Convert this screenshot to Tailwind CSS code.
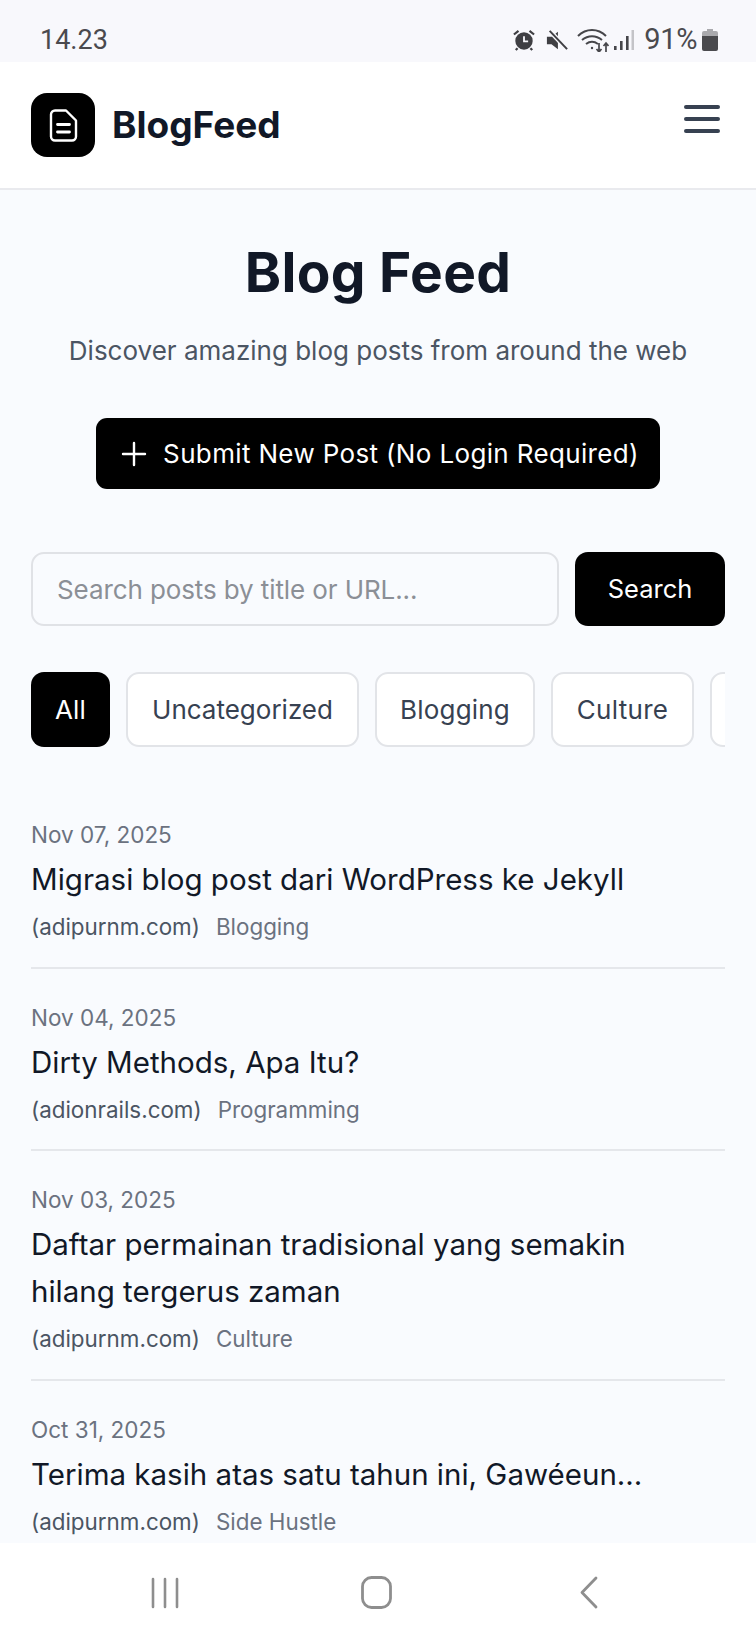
<!DOCTYPE html>
<html lang="en">
<head>
  <meta charset="UTF-8" />
  <meta name="viewport" content="width=device-width, initial-scale=1.0"/>
  <title>BlogFeed</title>
  <script src="https://cdn.jsdelivr.net/npm/@tailwindcss/browser@4"></script>
</head>
<body class="bg-[#f9fbfe]">
<div class="w-[756px] h-[1638px] flex flex-col overflow-hidden font-['Inter',sans-serif]">

  <!-- status bar -->
  <div class="h-[62px] shrink-0 bg-[#f8f8fc] flex items-center justify-between pl-[40px] pr-[38px] pt-[18px] font-['Roboto',sans-serif] text-[#4a4a4e] text-[27px]">
    <span>14.23</span>
    <div class="flex items-center">
      <svg width="22" height="22" viewBox="0 0 24 24" class="mr-[11px]" fill="#3f3f43">
        <circle cx="12" cy="13" r="9.5"/>
        <path d="M12 8v5.5h4.500" fill="none" stroke="#f8f8fc" stroke-width="2"/>
        <path d="M1 6l5-4M23 6l-5-4M5 21l-2 2M19 21l2 2" stroke="#3f3f43" stroke-width="2.400" fill="none"/>
      </svg>
      <svg width="22" height="22" viewBox="0 0 24 24" class="mr-[9px]" fill="#3f3f43">
        <path d="M1 8.500h5L13 3v19l-7-5.500H1z"/>
        <path d="M4 2l19 20" stroke="#f8f8fc" stroke-width="5"/>
        <path d="M4 2l19 20" stroke="#3f3f43" stroke-width="2.200"/>
      </svg>
      <svg width="32" height="24" viewBox="0 0 32 24" fill="none" stroke="#46464a" stroke-width="2" class="mr-[5px]">
        <path d="M1 8c8-8 20-8 28 0M5 12c6-5 14-5 20 0M9 16c4-3 8-3 12 0"/>
        <circle cx="15" cy="20" r="1.200" fill="#46464a" stroke="none"/>
        <path d="M22 15v9M19.500 21l2.500 3 2.500-3M29 24v-9M26.500 18l2.500-3 2.500 3" stroke-width="1.700"/>
      </svg>
      <svg width="20" height="22" viewBox="0 0 20 22" class="mr-[10px]">
        <rect x="0" y="17" width="2.600" height="4" fill="#46464a"/>
        <rect x="6" y="12" width="2.600" height="9" fill="#46464a"/>
        <rect x="12" y="7" width="2.600" height="14" fill="#46464a"/>
        <rect x="17.500" y="1" width="2.500" height="20" fill="#c4c4c8"/>
      </svg>
      <span class="text-[29px] tracking-[-0.4px]">91%</span>
      <svg width="16" height="22" viewBox="0 0 16 22" class="ml-[5px]">
        <path d="M5 0h6v2h3a2 2 0 0 1 2 2v4H0V4a2 2 0 0 1 2-2h3z" fill="#a9a9ad"/>
        <path d="M0 7h16v13a2 2 0 0 1-2 2H2a2 2 0 0 1-2-2z" fill="#4a4a4e"/>
      </svg>
    </div>
  </div>

  <!-- header -->
  <header class="h-[128px] shrink-0 bg-white border-b-2 border-[#e9eaee] flex items-center justify-between pl-[31px] pr-[36px]">
    <div class="flex items-center gap-[17px]">
      <div class="w-[64px] h-[64px] bg-black rounded-[16px] flex items-center justify-center">
        <svg width="36" height="36" viewBox="0 0 36 36" fill="none" stroke="white" stroke-width="2.400" stroke-linecap="round" stroke-linejoin="round">
          <path d="M21 3.500H10a4 4 0 0 0-4 4v22a4 4 0 0 0 4 4h17a4 4 0 0 0 4-4V13.500z"/>
          <path d="M12.500 17.500h12M12.500 25h12" stroke-width="2.800"/>
        </svg>
      </div>
      <span class="text-[37px] font-bold text-[#111827]">BlogFeed</span>
    </div>
    <div class="w-[36px] mb-[12px] flex flex-col gap-[8px]">
      <div class="h-[4px] rounded-full bg-[#374151]"></div>
      <div class="h-[4px] rounded-full bg-[#374151]"></div>
      <div class="h-[4px] rounded-full bg-[#374151]"></div>
    </div>
  </header>

  <!-- main -->
  <main class="flex-1 min-h-0 overflow-hidden px-[31px] pt-[42px]">
    <h1 class="text-center text-[55px] leading-[80px] font-bold text-[#111827] tracking-[0.3px]">Blog Feed</h1>
    <p class="text-center text-[26px] leading-[40px] text-[#4b5563] mt-[19px]">Discover amazing blog posts from around the web</p>

    <div class="flex justify-center mt-[47px]">
      <div class="w-[564px] h-[71px] bg-black rounded-[11px] flex items-center justify-center gap-[16px] pl-[4px] text-white text-[26px]">
        <svg width="26" height="26" viewBox="0 0 26 26" fill="none" stroke="white" stroke-width="2.400" stroke-linecap="round"><path d="M13 2v22M2 13h22"/></svg>
        <span class="tracking-[0.35px]">Submit New Post (No Login Required)</span>
      </div>
    </div>

    <div class="flex gap-[16px] mt-[63px]">
      <div class="w-[528px] h-[74px] border-2 border-[#e0e2e6] rounded-[13px] flex items-center px-[24px] text-[26px] text-[#8b8f96] tracking-[-0.1px]">Search posts by title or URL...</div>
      <div class="w-[150px] h-[74px] bg-black text-white rounded-[13px] flex items-center justify-center text-[25.500px]">Search</div>
    </div>

    <div class="flex gap-[16px] mt-[46px] overflow-hidden w-[694px]">
      <div class="shrink-0 w-[79px] h-[75px] bg-black text-white rounded-[13px] flex items-center justify-center text-[26px] tracking-[0.2px]">All</div>
      <div class="shrink-0 w-[233px] h-[75px] bg-white border-2 border-[#e2e4e8] rounded-[13px] flex items-center justify-center text-[26px] text-[#374151]">Uncategorized</div>
      <div class="shrink-0 w-[160px] h-[75px] bg-white border-2 border-[#e2e4e8] rounded-[13px] flex items-center justify-center text-[26px] text-[#374151] tracking-[0.2px]">Blogging</div>
      <div class="shrink-0 w-[143px] h-[75px] bg-white border-2 border-[#e2e4e8] rounded-[13px] flex items-center justify-center text-[26px] text-[#374151] tracking-[0.3px]">Culture</div>
      <div class="shrink-0 w-[143px] h-[75px] bg-white border-2 border-[#e2e4e8] rounded-[13px]"></div>
    </div>

    <div class="mt-[67px]">
      <article class="border-b-2 border-[#e5e7eb] pb-[17px]">
        <div class="text-[22.500px] leading-[42px] text-[#6b7280]">Nov 07, 2025</div>
        <div class="text-[29.500px] leading-[47px] text-[#111827]">Migrasi blog post dari WordPress ke Jekyll</div>
        <div class="flex gap-[16px] text-[22.400px] leading-[47px]"><span class="text-[#4b5563]">(adipurnm.com)</span><span class="text-[#6b7280]">Blogging</span></div>
      </article>
      <article class="border-b-2 border-[#e5e7eb] pt-[28px] pb-[16px]">
        <div class="text-[22.500px] leading-[42px] text-[#6b7280]">Nov 04, 2025</div>
        <div class="text-[29.500px] leading-[47px] text-[#111827]">Dirty Methods, Apa Itu?</div>
        <div class="flex gap-[16px] text-[22.400px] leading-[47px]"><span class="text-[#4b5563]">(adionrails.com)</span><span class="text-[#6b7280]">Programming</span></div>
      </article>
      <article class="border-b-2 border-[#e5e7eb] pt-[28px] pb-[17px]">
        <div class="text-[22.500px] leading-[42px] text-[#6b7280]">Nov 03, 2025</div>
        <div class="text-[29.500px] leading-[47px] text-[#111827]">Daftar permainan tradisional yang semakin<br>hilang tergerus zaman</div>
        <div class="flex gap-[16px] text-[22.400px] leading-[47px]"><span class="text-[#4b5563]">(adipurnm.com)</span><span class="text-[#6b7280]">Culture</span></div>
      </article>
      <article class="pt-[28px]">
        <div class="text-[22.500px] leading-[42px] text-[#6b7280]">Oct 31, 2025</div>
        <div class="text-[29.500px] leading-[47px] text-[#111827]">Terima kasih atas satu tahun ini, Gawéeun...</div>
        <div class="flex gap-[16px] text-[22.400px] leading-[47px]"><span class="text-[#4b5563]">(adipurnm.com)</span><span class="text-[#6b7280]">Side Hustle</span></div>
      </article>
    </div>
  </main>

  <!-- android nav -->
  <nav class="h-[95px] shrink-0 bg-white flex items-center pl-[151px] pt-[4px]">
    <svg width="28" height="32" viewBox="0 0 28 32" stroke="#8e8e8e" stroke-width="2.600" stroke-linecap="round"><path d="M2 2v28M14 2v28M26 2v28"/></svg>
    <svg width="31" height="33" viewBox="0 0 31 33" fill="none" stroke="#8e8e8e" stroke-width="2.800" class="ml-[182px]"><rect x="1.500" y="1.500" width="28" height="30" rx="9"/></svg>
    <svg width="18" height="33" viewBox="0 0 18 33" fill="none" stroke="#8e8e8e" stroke-width="2.800" stroke-linecap="round" stroke-linejoin="round" class="ml-[188px]"><path d="M16 2L2 16.500l14 14.500"/></svg>
  </nav>
</div>
</body>
</html>
